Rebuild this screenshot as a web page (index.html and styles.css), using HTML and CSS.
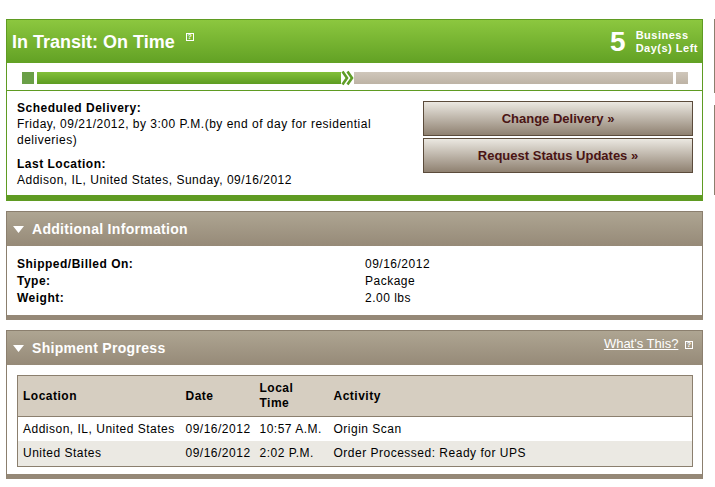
FILE: index.html
```html
<!DOCTYPE html>
<html>
<head>
<meta charset="utf-8">
<link rel="stylesheet" href="styles.css">
</head>
<body>
<div class="page">
  <div class="main">
    <section class="status">
      <div class="status-head">
        <h1 class="status-title">In Transit: On Time <span class="help">?</span></h1>
        <div class="days">
          <span class="days-num">5</span>
          <span class="days-label">Business<br>Day(s) Left</span>
        </div>
      </div>
      <div class="progress">
        <span class="prog-start"></span>
        <span class="prog-done"></span>
        <svg class="prog-arrow" width="13" height="18" viewBox="0 0 13 18">
          <polyline points="1.5,2.5 6,9 1.5,15.5" fill="none" stroke="#fff" stroke-width="5" stroke-linejoin="miter"/>
          <polyline points="6.5,2.5 11,9 6.5,15.5" fill="none" stroke="#fff" stroke-width="5" stroke-linejoin="miter"/>
          <polyline points="1.5,2.5 6,9 1.5,15.5" fill="none" stroke="#5f9d27" stroke-width="2.6" stroke-linejoin="miter"/>
          <polyline points="6.5,2.5 11,9 6.5,15.5" fill="none" stroke="#5f9d27" stroke-width="2.6" stroke-linejoin="miter"/>
        </svg>
        <span class="prog-rest"></span>
        <span class="prog-end"></span>
      </div>
      <div class="status-body">
        <div class="status-info">
          <div class="info-group">
            <div class="label">Scheduled Delivery:</div>
            <div>Friday, 09/21/2012, by 3:00 P.M.(by end of day for residential deliveries)</div>
          </div>
          <div class="info-group">
            <div class="label">Last Location:</div>
            <div>Addison, IL, United States, Sunday, 09/16/2012</div>
          </div>
        </div>
        <div class="actions">
          <a class="btn">Change Delivery »</a>
          <a class="btn">Request Status Updates »</a>
        </div>
      </div>
    </section>

    <section class="panel">
      <div class="panel-head">
        <h2 class="panel-title"><svg class="tri" width="11" height="7" viewBox="0 0 11 7"><polygon points="0,0 11,0 5.5,7" fill="#fff"/></svg>Additional Information</h2>
      </div>
      <div class="panel-body info-grid">
        <div class="label">Shipped/Billed On:</div><div>09/16/2012</div>
        <div class="label">Type:</div><div>Package</div>
        <div class="label">Weight:</div><div>2.00 lbs</div>
      </div>
    </section>

    <section class="panel">
      <div class="panel-head">
        <h2 class="panel-title"><svg class="tri" width="11" height="7" viewBox="0 0 11 7"><polygon points="0,0 11,0 5.5,7" fill="#fff"/></svg>Shipment Progress</h2>
        <div class="whats"><a class="whats-link">What's This?</a> <span class="help">?</span></div>
      </div>
      <div class="panel-body table-wrap">
        <table class="prog-table">
          <colgroup>
            <col class="c1"><col class="c2"><col class="c3"><col>
          </colgroup>
          <thead>
            <tr><th>Location</th><th>Date</th><th>Local<br>Time</th><th>Activity</th></tr>
          </thead>
          <tbody>
            <tr><td>Addison, IL, United States</td><td>09/16/2012</td><td>10:57 A.M.</td><td>Origin Scan</td></tr>
            <tr class="alt"><td>United States</td><td>09/16/2012</td><td>2:02 P.M.</td><td>Order Processed: Ready for UPS</td></tr>
          </tbody>
        </table>
      </div>
    </section>
  </div>
  <div class="side">
    <div class="side-line a"></div>
    <div class="side-line b"></div>
  </div>
</div>
</body>
</html>
```

FILE: styles.css
```css
html, body {
  margin: 0;
  padding: 0;
  background: #fff;
}
body {
  font-family: "Liberation Sans", Arial, Helvetica, sans-serif;
  font-size: 12px;
  line-height: 16px;
  letter-spacing: 0.5px;
  color: #000;
  overflow: hidden;
}
.page {
  display: flex;
  gap: 11px;
  padding: 19px 0 0 6px;
}
.main {
  width: 697px;
  flex: none;
}
.side {
  display: flex;
  flex-direction: column;
  gap: 12px;
}
.side-line {
  border-left: 1px solid #8b7f6e;
  width: 0;
}
.side-line.a { height: 74px; }
.side-line.b { height: 90px; }

/* status box */
.status {
  border: 1px solid #5f9b22;
  border-bottom: 6px solid #5f9b22;
}
.status-head {
  height: 43px;
  display: flex;
  align-items: center;
  justify-content: space-between;
  padding: 0 4px 0 5px;
  background: linear-gradient(#8cc73f, #62a124);
}
.status-title {
  margin: 0;
  font-size: 18px;
  font-weight: bold;
  color: #fff;
  line-height: 22px;
  letter-spacing: 0;
}
.help {
  display: inline-block;
  width: 6px;
  height: 6px;
  border: 1px solid #fff;
  color: #fff;
  font-size: 7px;
  line-height: 6px;
  text-align: center;
  font-weight: bold;
  letter-spacing: 0;
  vertical-align: 9px;
  margin-left: 6px;
}
.days {
  display: flex;
  align-items: center;
  gap: 10px;
  color: #fff;
  font-weight: bold;
}
.days-num {
  font-size: 28px;
  line-height: 28px;
  letter-spacing: 0;
}
.days-label {
  font-size: 11px;
  line-height: 13px;
}

.progress {
  display: flex;
  align-items: center;
  height: 12px;
  padding: 9px 0 6px 15px;
  border-bottom: 1px solid #5f9b22;
  background: #fff;
}
.prog-start {
  width: 12px;
  height: 12px;
  background: #6a9f47;
}
.prog-done {
  margin-left: 3px;
  width: 304px;
  height: 12px;
  background: linear-gradient(#83c03a, #5d9c22);
}
.prog-arrow {
  flex: none;
  margin: -3px 0;
}
.prog-rest {
  flex: 1;
  height: 12px;
  background: linear-gradient(#cfc7bb, #bdb3a5);
}
.prog-end {
  width: 12px;
  height: 12px;
  margin: 0 14px 0 3px;
  background: linear-gradient(#cfc7bb, #bdb3a5);
}

.status-body {
  display: flex;
  justify-content: space-between;
  padding: 0 9px 0 10px;
  height: 104px;
}
.status-info {
  width: 390px;
  padding-top: 9px;
}
.info-group + .info-group {
  margin-top: 8px;
}
.label {
  font-weight: bold;
}
.actions {
  width: 270px;
  padding-top: 10px;
  display: flex;
  flex-direction: column;
  gap: 2px;
}
.btn {
  display: flex;
  align-items: center;
  justify-content: center;
  height: 33px;
  border: 1px solid #5b4b3b;
  background: linear-gradient(#ebe8e1, #8f8171);
  color: #4a1414;
  font-weight: bold;
  font-size: 13px;
  letter-spacing: 0;
}

/* panels */
.panel {
  margin-top: 10px;
  border: 1px solid #8b7f6e;
  border-bottom: 5px solid #958877;
}
.panel-head {
  display: flex;
  justify-content: space-between;
  align-items: center;
  height: 34px;
  padding: 0 9px 0 6px;
  background: linear-gradient(#aea592, #968a78);
}
.panel:first-of-type .panel-head { height: 33px; }
.panel-title {
  margin: 0;
  display: flex;
  align-items: center;
  gap: 8px;
  color: #fff;
  font-size: 14px;
  font-weight: bold;
  letter-spacing: 0.3px;
}
.tri { flex: none; }
.whats {
  align-self: flex-start;
  margin-top: 5px;
  color: #fff;
  font-size: 13px;
  line-height: 15px;
  letter-spacing: 0;
}
.whats-link {
  color: #fff;
  text-decoration: underline;
}
.whats .help {
  vertical-align: 1px;
  margin-left: 3px;
}
.panel-body {
  background: #fff;
}
.info-grid {
  display: grid;
  grid-template-columns: 348px 1fr;
  padding: 10px 10px 8px 10px;
  line-height: 17px;
}
.table-wrap {
  padding: 10px 9px 7px 10px;
}
.prog-table {
  width: 100%;
  border-collapse: collapse;
  table-layout: fixed;
  border: 1px solid #8b7f6e;
}
.c1 { width: 164px; }
.c2 { width: 74px; }
.c3 { width: 74px; }
.prog-table th {
  background: #d6cec1;
  text-align: left;
  font-weight: bold;
  height: 40px;
  line-height: 15px;
  padding: 0 4px;
  border-bottom: 1px solid #8b7f6e;
  vertical-align: middle;
}
.prog-table td {
  height: 24px;
  padding: 0 4px;
  line-height: 15px;
  white-space: nowrap;
}
.prog-table th:first-child,
.prog-table td:first-child {
  padding-left: 5px;
}
.prog-table tr.alt td {
  background: #ebe9e3;
  height: 25px;
}
```
